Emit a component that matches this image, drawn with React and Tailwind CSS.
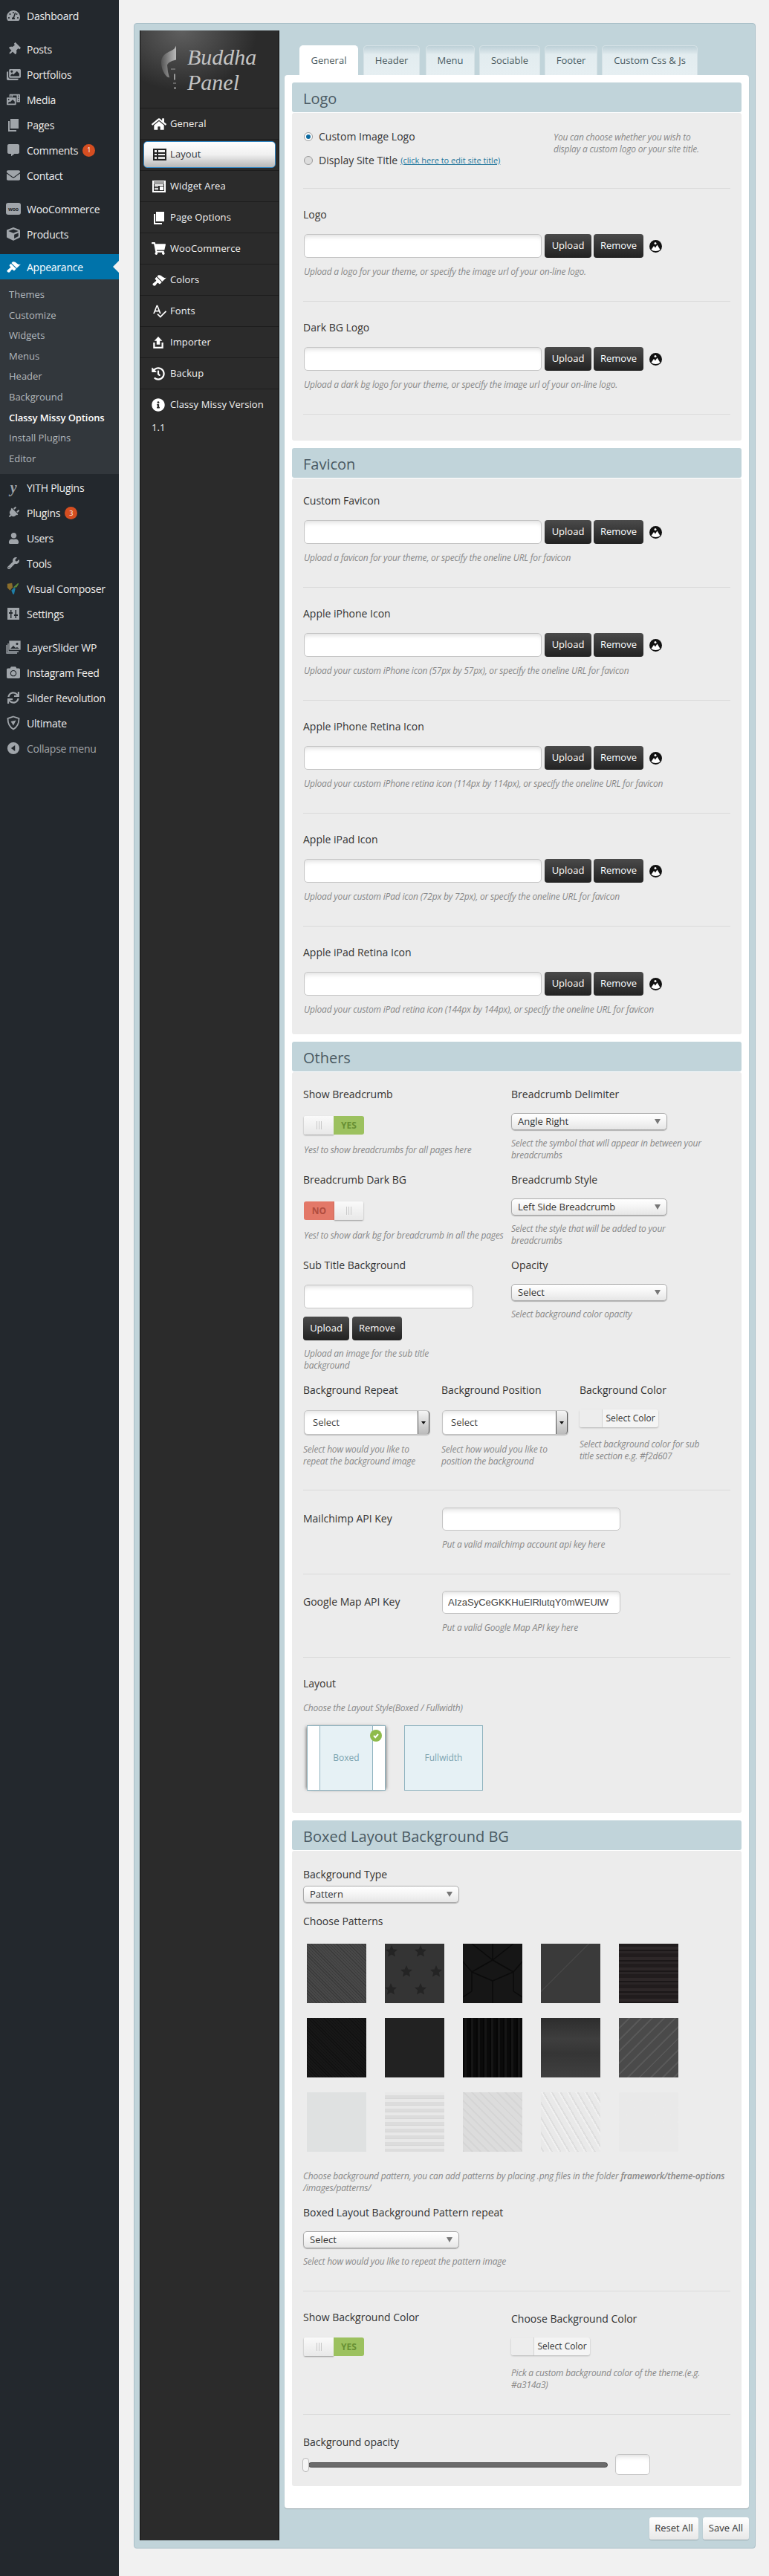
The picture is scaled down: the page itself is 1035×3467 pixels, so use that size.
import React from "react";
import { FaHome, FaShoppingCart, FaHistory, FaInfoCircle, FaTachometerAlt, FaThumbtack, FaImages, FaCommentAlt, FaEnvelope, FaCube, FaPlug, FaUser, FaWrench, FaCamera, FaSync, FaPhotoVideo } from "react-icons/fa";
import { MdSpellcheck } from "react-icons/md";

const BRUSH = "M14.48 11.06L7.41 3.99l1.5-1.5c.5-.56 2.3-.47 3.51.32 1.21.8 1.43 1.28 2.91 2.1 1.18.64 2.45 1.26 4.45.85zm-.71.71L6.7 4.7 4.93 6.47c-.39.39-.39 1.02 0 1.41l1.06 1.06c.39.39.39 1.03 0 1.42-.6.6-1.43 1.11-2.21 1.69-.35.26-.7.53-1.01.84C1.43 13.23 1 14.34 2.01 16.01c1.66 1.01 2.78.57 3.12.23.31-.31.58-.66.84-1.01.58-.78 1.09-1.61 1.69-2.21.39-.39 1.03-.39 1.42 0l1.06 1.06c.39.39 1.02.39 1.41 0z";

const Brush = ({ className }) => (
  <svg viewBox="0 0 20 18" className={className} fill="currentColor"><path d={BRUSH} /></svg>
);
const Pages = ({ className }) => (
  <svg viewBox="0 0 20 20" className={className} fill="currentColor">
    <path d="M6 2h11v13H6z" /><path d="M3 5h2v12h9v2H3z" />
  </svg>
);
const Woo = () => (
  <span className="flex h-[16px] w-[20px] items-center justify-center rounded-[3px] bg-[#a0a5aa] text-[7px] font-bold leading-none text-[#23282d]">woo</span>
);
const Yith = () => <span className="w-[20px] text-center font-['Liberation_Serif',serif] text-[20px] font-bold italic leading-none text-[#a0a5aa]">y</span>;
const VC = () => (
  <svg viewBox="0 0 20 20" className="h-[18px] w-[18px]">
    <path d="M1 3l7-1 1 6-4 5-4-4z" fill="#8a6d2b" />
    <path d="M10 8l7-6 1 1-3 5-4 1z" fill="#5f8a3a" />
    <path d="M7 13l4-4 2 1-2 9-2-1z" fill="#1f7fa8" />
  </svg>
);
const Settings = () => (
  <svg viewBox="0 0 20 20" className="h-[20px] w-[20px]" fill="#a0a5aa">
    <path fillRule="evenodd" d="M2 2h16v16H2zM6 5v3H4v2h2v6h1.500v-6H9V8H7.500V5zM12.500 5v6H11v2h1.500v3H14v-3h2v-2h-2V5z" />
  </svg>
);
const Layers = () => (
  <svg viewBox="0 0 20 20" className="h-[20px] w-[20px]" fill="none" stroke="#a0a5aa" strokeWidth="1.300">
    <path d="M1 7v11h14M3 5v11h14" />
    <rect x="5" y="2" width="14" height="11" fill="#a0a5aa" />
    <circle cx="15" cy="5.500" r="1.500" fill="#23282d" stroke="none" />
    <path d="M6 12l4-4 3 3 2-1 3 2z" fill="#23282d" stroke="none" />
  </svg>
);
const Shield = () => (
  <svg viewBox="0 0 20 20" className="h-[20px] w-[20px]" fill="none" stroke="#a0a5aa" strokeWidth="1.800">
    <path d="M10 1.500l7.500 2.500c0 7-2 11.500-7.500 14.500C4.500 15.500 2.500 11 2.500 4z" />
    <path d="M6.500 8l7-1.500-3.500 7z" fill="#a0a5aa" stroke="none" />
  </svg>
);
const Collapse = () => (
  <svg viewBox="0 0 20 20" className="h-[18px] w-[18px]" fill="#a0a5aa">
    <path fillRule="evenodd" d="M10 1a9 9 0 110 18 9 9 0 010-18zm2.500 4.500L6.500 10l6 4.500z" />
  </svg>
);

const adminTop = [
  [<FaTachometerAlt size={18} />, "Dashboard"],
  null,
  [<FaThumbtack size={17} className="rotate-45" />, "Posts"],
  [<FaImages size={19} />, "Portfolios"],
  [<FaPhotoVideo size={18} />, "Media"],
  [<Pages className="h-[20px] w-[20px]" />, "Pages"],
  [<FaCommentAlt size={16} />, "Comments", 1, "ml-[6px]"],
  [<FaEnvelope size={18} />, "Contact"],
  null,
  [<Woo />, "WooCommerce"],
  [<FaCube size={18} />, "Products"],
];
const adminBottom = [
  [<Yith />, "YITH Plugins"],
  [<FaPlug size={16} className="rotate-45" />, "Plugins", 3, "ml-[6px]"],
  [<FaUser size={15} />, "Users"],
  [<FaWrench size={16} />, "Tools"],
  [<VC />, "Visual Composer"],
  [<Settings />, "Settings"],
  null,
  [<Layers />, "LayerSlider WP"],
  [<FaCamera size={18} />, "Instagram Feed"],
  [<FaSync size={16} />, "Slider Revolution"],
  [<Shield />, "Ultimate"],
];
const subs = ["Themes", "Customize", "Widgets", "Menus", "Header", "Background", "Classy Missy Options", "Install Plugins", "Editor"];

function AdminItem({ item }) {
  return (
    <div className="flex h-[34px] items-center text-[14px] tracking-[-0.25px] text-[#eeeeee]">
      <span className="flex w-[36px] shrink-0 justify-center pl-[1px] pr-[1px] text-[#a0a5aa]">{item[0]}</span>
      <span className="whitespace-nowrap">{item[1]}</span>
      {item[2] ? (
        <span className={`${item[3]} flex h-[17px] w-[17px] items-center justify-center rounded-full bg-[#d54e21] text-[9px] text-white`}>{item[2]}</span>
      ) : null}
    </div>
  );
}

function AdminMenu() {
  return (
    <aside className="w-[160px] shrink-0 bg-[#23282d]">
      <div className="pt-[4px]">
        {adminTop.map((it, i) => (it ? <AdminItem key={i} item={it} /> : <div key={i} className="h-[11px]" />))}
      </div>
      <div className="relative mt-[10px] flex h-[34px] items-center bg-[#0073aa] text-[14px] tracking-[-0.25px] text-white">
        <span className="flex w-[36px] justify-center"><Brush className="h-[18px] w-[20px]" /></span>
        <span>Appearance</span>
        <span className="absolute right-0 top-[9px] h-0 w-0 border-y-[8px] border-r-[8px] border-y-transparent border-r-[#f1f1f1]" />
      </div>
      <div className="bg-[#32373c] py-[7px] text-[13px] text-[#b4b9be]">
        {subs.map((s) => (
          <div key={s} className={`flex h-[27.6px] items-center whitespace-nowrap pl-[12px] ${s === "Classy Missy Options" ? "font-semibold tracking-[-0.1px] text-white" : ""}`}>{s}</div>
        ))}
      </div>
      <div className="pt-[1px]">
        {adminBottom.map((it, i) => (it ? <AdminItem key={i} item={it} /> : <div key={i} className="h-[11px]" />))}
        <div className="flex h-[34px] items-center text-[14px] tracking-[-0.25px] text-[#a0a5aa]">
          <span className="flex w-[36px] justify-center"><Collapse /></span>
          <span>Collapse menu</span>
        </div>
      </div>
    </aside>
  );
}

const LayoutIc = ({ className }) => (
  <svg viewBox="0 0 20 20" className={className} fill="currentColor">
    <path fillRule="evenodd" d="M1 2h18v16H1zM3 4v3h3V4zM8 4v3h9V4zM3 9v2h3V9zM8 9v2h9V9zM3 13v3h3v-3zM8 13v3h9v-3z" />
  </svg>
);
const WidgetIc = ({ className }) => (
  <svg viewBox="0 0 20 20" className={className} fill="currentColor">
    <path fillRule="evenodd" d="M1 2h18v16H1zM3 6v10h14V6zM3 3.500v1h14v-1z" />
    <path d="M4 7h12v2H4zM4 10h5v1H4zM4 12h5v1H4zM4 14h5v1H4zM11 10h5v5h-5z" />
  </svg>
);
const UploadIc = ({ className }) => (
  <svg viewBox="0 0 20 20" className={className} fill="currentColor">
    <path d="M10 1l6 6.500h-3.500V13h-5V7.500H4z" /><path d="M2.500 10H5v6.500h10V10h2.500v9h-15z" />
  </svg>
);

const panelMenu = [
  [<FaHome size={20} />, "General"],
  [<LayoutIc className="h-[20px] w-[20px]" />, "Layout", true],
  [<WidgetIc className="h-[20px] w-[20px]" />, "Widget Area"],
  [<Pages className="h-[20px] w-[20px]" />, "Page Options"],
  [<FaShoppingCart size={19} />, "WooCommerce"],
  [<Brush className="h-[18px] w-[20px]" />, "Colors"],
  [<MdSpellcheck size={21} />, "Fonts"],
  [<UploadIc className="h-[18px] w-[18px]" />, "Importer"],
  [<FaHistory size={18} />, "Backup"],
  [<FaInfoCircle size={18} />, "Classy Missy Version"],
];

function PanelMenu() {
  return (
    <div className="w-[188px] shrink-0 border-x border-[#111111] bg-[#2b2b2b] text-[13px] tracking-[0.1px] text-[#f2f2f2]">
      <div className="flex h-[104px] items-start bg-[radial-gradient(ellipse_at_30%_0%,#5f5f5f,#2b2b2b_55%)] pl-[28px] pt-[20px]">
        <svg viewBox="0 0 20 60" className="mr-[15px] h-[61px] w-[20px] shrink-0">
          <defs><linearGradient id="hd" x1="0" x2="1" y1="0" y2="0"><stop offset="0" stopColor="#555" /><stop offset="1" stopColor="#bbb" /></linearGradient></defs>
          <path d="M20 0v19c-5 1-10 3-12 7l1 9 2 8-3-1c-5-5-8-12-8-20 0-7 5-12 13-15 4-2 6-4 7-7z" fill="url(#hd)" />
          <path d="M13 31h6v1h-6zM17 38h2v8h-2zM16 50h4v1h-4zM17 56h3v2h-3z" fill="#999" />
        </svg>
        <div className="font-['Liberation_Serif',serif] text-[30px] italic leading-[34px] tracking-normal text-[#c4c4c4]">
          <div className="mt-[-1px]">Buddha</div>
          <div>Panel</div>
        </div>
      </div>
      {panelMenu.map(([ic, label, active]) => (
        <div key={label} className="h-[42px] border-t border-[#1d1d1d] pl-[1px] pr-[1px]">
          {active ? (
            <div className="mx-[3px] mt-[2px] flex h-[36px] items-center rounded-[5px] border border-[#2f86c5] bg-[linear-gradient(#ffffff,#f0f0f0_50%,#b8b8b8)] pl-[11px] text-[#333333]">
              <span className="flex w-[24px] shrink-0 justify-start text-[#222222]">{ic}</span>
              <span className="pl-[0px]">{label}</span>
            </div>
          ) : (
            <div className="flex h-[41px] items-center pl-[14px]">
              <span className="flex w-[25px] shrink-0 justify-start text-white">{ic}</span>
              <span className="whitespace-nowrap">{label}</span>
            </div>
          )}
        </div>
      ))}
      <div className="pl-[15px] pt-[0px] leading-[20px]">1.1</div>
    </div>
  );
}

const Label = ({ children, className = "" }) => (
  <div className={`h-[20px] whitespace-nowrap text-[14px] leading-[20px] text-[#333333] ${className}`}>{children}</div>
);
const Desc = ({ children, className = "" }) => (
  <div className={`text-[12px] italic leading-[16px] tracking-[-0.2px] text-[#888888] ${className}`}>{children}</div>
);
const SectionHead = ({ children }) => (
  <div className="flex h-[40px] items-center rounded-[3px] bg-[#c1d4da] pl-[15px] pt-[3px] text-[20px] text-[#4a5a63]">{children}</div>
);
const Body = ({ children, className = "" }) => (
  <div className={`mt-[1px] rounded-[3px] bg-[#ececec] px-[15px] ${className}`}>{children}</div>
);
const Field = ({ w, h, children }) => (
  <div className={`${w} ${h} rounded-[5px] border border-[#c4c4c4] bg-white shadow-[inset_0_6px_6px_-4px_rgba(0,0,0,0.14)]`}>{children}</div>
);
const DarkBtn = ({ children, className }) => (
  <div className={`flex items-center justify-center rounded-[4px] bg-[linear-gradient(#4a4a4a,#222222)] text-[13px] text-white ${className}`}>{children}</div>
);
const ImgIcon = () => (
  <svg viewBox="0 0 17 17" className="h-[17px] w-[17px]">
    <circle cx="8.500" cy="8.500" r="8.500" fill="#111111" />
    <path d="M2.500 13l3.500-5 2 2.500 2.500-4 4 6.500c-1.500 1.200-3.500 2-6 2s-4.500-.8-6-2z" fill="#ffffff" />
    <circle cx="8" cy="4.500" r="1.500" fill="#ffffff" />
  </svg>
);

function UploadRow({ label, desc, first, last }) {
  return (
    <div className={`${first ? "pt-[20px]" : "pt-[25px]"} ${last ? "pb-[25px]" : "border-b border-[#dadada] pb-[31px]"}`}>
      <Label>{label}</Label>
      <div className="mt-[16px] flex h-[32px] items-center pl-[1px]">
        <Field w="w-[320px]" h="h-[32px]" />
        <DarkBtn className="ml-[4px] h-[32px] w-[63px]">Upload</DarkBtn>
        <DarkBtn className="ml-[3px] h-[32px] w-[67px]">Remove</DarkBtn>
        <span className="ml-[8px]"><ImgIcon /></span>
      </div>
      <Desc className="mt-[11px] pl-[1px]">{desc}</Desc>
    </div>
  );
}

const Toggle = ({ on }) =>
  on ? (
    <div className="ml-[1px] flex h-[25px] w-[81px]">
      <div className="flex w-[40px] items-center justify-center gap-[2px] rounded-l-[2px] bg-[linear-gradient(#fafafa,#e8e8e8)] shadow-[0_1px_2px_rgba(0,0,0,0.35)]">
        <i className="h-[11px] w-px bg-[#c9c9c9]" /><i className="h-[11px] w-px bg-[#c9c9c9]" /><i className="h-[11px] w-px bg-[#c9c9c9]" />
      </div>
      <div className="flex flex-1 items-center justify-center rounded-r-[3px] bg-[#9cc15f] text-[12px] font-bold text-[#678f33]">YES</div>
    </div>
  ) : (
    <div className="ml-[1px] flex h-[25px] w-[80px]">
      <div className="flex w-[41px] items-center justify-center rounded-l-[3px] bg-[#e37868] text-[12px] font-bold text-[#b04c3f]">NO</div>
      <div className="flex flex-1 items-center justify-center gap-[2px] rounded-r-[2px] bg-[linear-gradient(#fafafa,#e8e8e8)] shadow-[0_1px_2px_rgba(0,0,0,0.35)]">
        <i className="h-[11px] w-px bg-[#c9c9c9]" /><i className="h-[11px] w-px bg-[#c9c9c9]" /><i className="h-[11px] w-px bg-[#c9c9c9]" />
      </div>
    </div>
  );

const Select = ({ children, className = "" }) => (
  <div className={`relative flex h-[23px] w-[210px] items-center rounded-[5px] border border-[#aaaaaa] bg-[linear-gradient(#ffffff,#f7f7f7_40%,#e6e6e6)] pl-[8px] text-[13px] text-[#333333] shadow-[0_1px_1px_rgba(0,0,0,0.25)] ${className}`}>
    {children}
    <span className="absolute right-[8px] top-[7px] h-0 w-0 border-x-[4px] border-t-[7px] border-x-transparent border-t-[#777777]" />
  </div>
);
const BigSelect = ({ className = "" }) => (
  <div className={`relative flex h-[33px] w-[170px] items-center rounded-[5px] border border-[#c4c4c4] bg-white pl-[11px] text-[13px] text-[#444444] shadow-[inset_0_6px_6px_-4px_rgba(0,0,0,0.12),0_1px_1px_rgba(0,0,0,0.2)] ${className}`}>
    Select
    <span className="absolute right-0 top-0 flex h-[31px] w-[16px] items-center justify-center rounded-r-[4px] border-x border-[#555555] bg-[linear-gradient(#f5f5f5,#bbbbbb)]">
      <span className="h-0 w-0 border-x-[3px] border-t-[4px] border-x-transparent border-t-[#111111]" />
    </span>
  </div>
);
const ColorPick = () => (
  <div className="flex h-[24px] w-[106px] rounded-[3px] bg-[#f4f4f4] text-[12px] text-[#333333] shadow-[0_1px_2px_rgba(0,0,0,0.25)]">
    <div className="w-[31px] rounded-l-[3px] border-r border-[#d4d4d4] bg-[#ededed]" />
    <div className="flex flex-1 items-center justify-center">Select Color</div>
  </div>
);

const stars = [[9, 10], [48, 10], [29, 37], [69, 37], [8, 61], [48, 61]];
const Star = ({ x, y }) => (
  <path transform={`translate(${x} ${y})`} d="M0-8l2.300 5.500 5.700.5-4.300 3.800 1.300 5.700L0 4.500l-5 3 1.300-5.700L-8-2l5.700-.5z" fill="#242424" />
);
const patterns = [
  <div className="h-full w-full bg-[#434343] bg-[repeating-linear-gradient(45deg,#3b3b3b_0_1px,#484848_1px_3px)]" />,
  <svg viewBox="0 0 80 80" className="h-full w-full bg-[#343434]">{stars.map(([x, y]) => <Star key={x + "-" + y} x={x} y={y} />)}</svg>,
  <svg viewBox="0 0 80 80" className="h-full w-full bg-[#161616]" stroke="#0b0b0b" strokeWidth="1.500" fill="none"><path d="M40 0v22M40 22L12 38v26M40 22l28 16v26M0 24l12 14M80 24L68 38M40 50L12 38M40 50l28-12M40 50v30M12 64L0 72M68 64l12 8M12 0l28 22M68 0L40 22" /></svg>,
  <div className="h-full w-full bg-[#3e3e3e] bg-[linear-gradient(135deg,#3a3a3a_0_40%,#454545_40%_41%,#3a3a3a_41%_100%)]" />,
  <div className="h-full w-full bg-[#241f20] bg-[repeating-linear-gradient(0deg,#1b1718_0_2px,#2d2728_2px_6px,#211c1d_6px_11px,#2a2526_11px_14px)]" />,
  <div className="h-full w-full bg-[#141414] bg-[repeating-linear-gradient(45deg,#111111_0_1px,#171717_1px_3px)]" />,
  <div className="h-full w-full bg-[#222222]" />,
  <div className="h-full w-full bg-[#0d0d0d] bg-[repeating-linear-gradient(90deg,#060606_0_2px,#151515_2px_5px,#0a0a0a_5px_9px)]" />,
  <div className="h-full w-full bg-[linear-gradient(#2d2d2d,#3e3e3e_35%,#353535_60%,#404040)]" />,
  <div className="h-full w-full bg-[#4a4a4a] bg-[repeating-linear-gradient(135deg,#4a4a4a_0_9px,#585858_9px_11px)]" />,
  <div className="h-full w-full bg-[#dfe1e1]" />,
  <div className="h-full w-full bg-[repeating-linear-gradient(0deg,#dcdcdc_0_4px,#e8e8e8_4px_8px,#d6d6d6_8px_9px)]" />,
  <div className="h-full w-full bg-[#dadada] bg-[repeating-linear-gradient(45deg,#d5d5d5_0_2px,#dcdcdc_2px_8px)]" />,
  <div className="h-full w-full bg-[#e6e6e6] bg-[repeating-linear-gradient(60deg,#f0f0f0_0_2px,#dedede_2px_4px,#e9e9e9_4px_10px)]" />,
  <div className="h-full w-full bg-[#ebebeb] bg-[repeating-linear-gradient(45deg,#f0f0f0_0_1px,#e9e9e9_1px_14px),repeating-linear-gradient(135deg,#f0f0f0_0_1px,#e9e9e9_1px_14px)] bg-blend-darken" />,
];

const tabs = [["General", "w-[79px]"], ["Header", "ml-[7px] w-[76px]"], ["Menu", "ml-[8px] w-[66px]"], ["Sociable", "ml-[6px] w-[82px]"], ["Footer", "ml-[6px] w-[71px]"], ["Custom Css & Js", "ml-[6px] w-[129px]"]];

function Content() {
  return (
    <div className="min-w-0 flex-1 pl-[7px] pt-[20px]">
      <div className="flex h-[40px] pl-[20px] text-[13px] text-[#4a5a60]">
        {tabs.map(([t, w], i) => (
          <div key={t} className={`${w} flex items-center justify-center whitespace-nowrap rounded-t-[5px] border border-b-0 ${i === 0 ? "border-white bg-white" : "border-[#d6e2e6] bg-[linear-gradient(#bdd0d7,#e2ecef_30%,#e6eff2)]"}`}>{t}</div>
        ))}
      </div>
      <div className="rounded-[4px] bg-white px-[10px] pb-[30px] pt-[10px] shadow-[0_1px_1px_rgba(0,0,0,0.2)]">
        <SectionHead>Logo</SectionHead>
        <Body>
          <div className="flex border-b border-[#dadada] pb-[27px] pt-[22px]">
            <div className="w-[337px] text-[14px] leading-[20px] text-[#333333]">
              <div className="flex h-[20px] items-center pl-[1px]">
                <span className="mr-[8px] flex h-[12px] w-[12px] items-center justify-center rounded-full border border-[#999999] bg-white"><span className="h-[6px] w-[6px] rounded-full bg-[#0b6aa0]" /></span>
                Custom Image Logo
              </div>
              <div className="mt-[12px] flex h-[20px] items-center pl-[1px]">
                <span className="mr-[8px] h-[12px] w-[12px] rounded-full border border-[#999999] bg-[#dddddd]" />
                Display Site Title
                <span className="ml-[4px] text-[11px] text-[#21759b] underline">(click here to edit site title)</span>
              </div>
            </div>
            <Desc className="pt-[3px]">You can choose whether you wish to<br />display a custom logo or your site title.</Desc>
          </div>
          <UploadRow label="Logo" desc="Upload a logo for your theme, or specify the image url of your on-line logo." />
          <UploadRow label="Dark BG Logo" desc="Upload a dark bg logo for your theme, or specify the image url of your on-line logo." />
          <div className="h-[35px]" />
        </Body>

        <div className="mt-[10px]"><SectionHead>Favicon</SectionHead></div>
        <Body>
          <UploadRow first label="Custom Favicon" desc="Upload a favicon for your theme, or specify the oneline URL for favicon" />
          <UploadRow label="Apple iPhone Icon" desc="Upload your custom iPhone icon (57px by 57px), or specify the oneline URL for favicon" />
          <UploadRow label="Apple iPhone Retina Icon" desc="Upload your custom iPhone retina icon (114px by 114px), or specify the oneline URL for favicon" />
          <UploadRow label="Apple iPad Icon" desc="Upload your custom iPad icon (72px by 72px), or specify the oneline URL for favicon" />
          <UploadRow last label="Apple iPad Retina Icon" desc="Upload your custom iPad retina icon (144px by 144px), or specify the oneline URL for favicon" />
        </Body>

        <div className="mt-[10px]"><SectionHead>Others</SectionHead></div>
        <Body>
          <div className="grid grid-cols-[280px_1fr] grid-rows-[115px_115px_168px] pt-[20px]">
            <div>
              <Label>Show Breadcrumb</Label>
              <div className="mt-[19px]"><Toggle on /></div>
              <Desc className="mt-[13px] pl-[1px]">Yes! to show breadcrumbs for all pages here</Desc>
            </div>
            <div>
              <Label>Breadcrumb Delimiter</Label>
              <Select className="mt-[15px]">Angle Right</Select>
              <Desc className="mt-[10px] w-[270px]">Select the symbol that will appear in between your breadcrumbs</Desc>
            </div>
            <div>
              <Label>Breadcrumb Dark BG</Label>
              <div className="mt-[19px]"><Toggle /></div>
              <Desc className="mt-[13px] whitespace-nowrap pl-[1px]">Yes! to show dark bg for breadcrumb in all the pages</Desc>
            </div>
            <div>
              <Label>Breadcrumb Style</Label>
              <Select className="mt-[15px]">Left Side Breadcrumb</Select>
              <Desc className="mt-[10px] w-[220px]">Select the style that will be added to your breadcrumbs</Desc>
            </div>
            <div>
              <Label>Sub Title Background</Label>
              <div className="ml-[1px] mt-[16px]"><Field w="w-[228px]" h="h-[32px]" /></div>
              <div className="mt-[11px] flex gap-[4px]">
                <DarkBtn className="h-[32px] w-[62px]">Upload</DarkBtn>
                <DarkBtn className="h-[32px] w-[67px]">Remove</DarkBtn>
              </div>
              <Desc className="mt-[10px] w-[200px] pl-[1px]">Upload an image for the sub title background</Desc>
            </div>
            <div>
              <Label>Opacity</Label>
              <Select className="mt-[15px]">Select</Select>
              <Desc className="mt-[10px]">Select background color opacity</Desc>
            </div>
          </div>
          <div className="flex h-[145px] border-b border-[#dadada]">
            <div className="w-[186px]">
              <Label>Background Repeat</Label>
              <BigSelect className="ml-[1px] mt-[17px]" />
              <Desc className="mt-[12px] w-[170px]">Select how would you like to repeat the background image</Desc>
            </div>
            <div className="w-[186px]">
              <Label>Background Position</Label>
              <BigSelect className="ml-[1px] mt-[17px]" />
              <Desc className="mt-[12px] w-[170px]">Select how would you like to position the background</Desc>
            </div>
            <div className="flex-1">
              <Label>Background Color</Label>
              <div className="mt-[16px]"><ColorPick /></div>
              <Desc className="mt-[15px] w-[175px]">Select background color for sub title section e.g. #f2d607</Desc>
            </div>
          </div>
          <div className="flex border-b border-[#dadada] pb-[31px] pt-[23px]">
            <Label className="mt-[5px] w-[187px]">Mailchimp API Key</Label>
            <div>
              <Field w="w-[240px]" h="h-[31px]" />
              <Desc className="mt-[11px]">Put a valid mailchimp account api key here</Desc>
            </div>
          </div>
          <div className="flex border-b border-[#dadada] pb-[31px] pt-[22px]">
            <Label className="mt-[5px] w-[187px]">Google Map API Key</Label>
            <div>
              <Field w="w-[240px]" h="h-[31px]">
                <div className="mx-[7px] overflow-hidden whitespace-nowrap font-['Liberation_Sans',sans-serif] text-[13px] leading-[29px] text-[#444444]">AIzaSyCeGKKHuElRlutqY0mWEUlW</div>
              </Field>
              <Desc className="mt-[11px]">Put a valid Google Map API key here</Desc>
            </div>
          </div>
          <div className="pb-[30px] pt-[25px]">
            <Label>Layout</Label>
            <Desc className="mt-[15px]">Choose the Layout Style(Boxed / Fullwidth)</Desc>
            <div className="ml-[5px] mt-[15px] flex gap-[25px] text-[12px] text-[#7ba3ae]">
              <div className="relative flex h-[88px] w-[106px] border border-[#8fb3bf] bg-white shadow-[-3px_0_4px_-2px_#777777,3px_0_4px_-2px_#777777]">
                <div className="ml-[16px] mr-[16px] flex flex-1 items-center justify-center border-x border-[#8fb3bf] bg-[#e6f1f5]">Boxed</div>
                <span className="absolute right-[4px] top-[5px] flex h-[16px] w-[16px] items-center justify-center rounded-full bg-[#8ebb4b]">
                  <svg viewBox="0 0 10 10" className="h-[10px] w-[10px]" fill="none" stroke="#ffffff" strokeWidth="2"><path d="M2 5l2.200 2.200L8 3" /></svg>
                </span>
              </div>
              <div className="flex h-[88px] w-[106px] items-center justify-center border border-[#8fb3bf] bg-[#e6f1f5]">Fullwidth</div>
            </div>
          </div>
        </Body>

        <div className="mt-[10px]"><SectionHead>Boxed Layout Background BG</SectionHead></div>
        <Body>
          <div className="border-b border-[#dadada] pb-[31px] pt-[22px]">
            <Label>Background Type</Label>
            <Select className="mt-[5px]">Pattern</Select>
            <Label className="mt-[15px]">Choose Patterns</Label>
            <div className="ml-[5px] mt-[20px] grid grid-cols-[repeat(5,80px)] gap-x-[25px] gap-y-[20px]">
              {patterns.map((p, i) => (
                <div key={i} className="h-[80px] w-[80px] overflow-hidden">{p}</div>
              ))}
            </div>
            <Desc className="mt-[25px] whitespace-nowrap">Choose background pattern, you can add patterns by placing .png files in the folder <b className="font-semibold">framework/theme-options</b><br />/images/patterns/</Desc>
            <Label className="mt-[15px]">Boxed Layout Background Pattern repeat</Label>
            <Select className="mt-[15px]">Select</Select>
            <Desc className="mt-[10px]">Select how would you like to repeat the pattern image</Desc>
          </div>
          <div className="flex border-b border-[#dadada] pb-[31px] pt-[25px]">
            <div className="w-[280px]">
              <Label>Show Background Color</Label>
              <div className="mt-[17px]"><Toggle on /></div>
            </div>
            <div className="flex-1 pt-[2px]">
              <Label>Choose Background Color</Label>
              <div className="mt-[15px]"><ColorPick /></div>
              <Desc className="mt-[16px] w-[270px]">Pick a custom background color of the theme.(e.g. #a314a3)</Desc>
            </div>
          </div>
          <div className="pb-[15px] pt-[27px]">
            <Label>Background opacity</Label>
            <div className="mt-[6px] flex h-[28px] items-center">
              <div className="relative ml-[7px] h-[7px] w-[403px] rounded-[4px] border border-[#444444] bg-[#6b6b6b]">
                <span className="absolute left-[-9px] top-[-7px] h-[19px] w-[9px] rounded-[4px] border border-[#bbbbbb] bg-[#f5f5f5]" />
              </div>
              <div className="ml-[10px]"><Field w="w-[47px]" h="h-[28px]" /></div>
            </div>
          </div>
        </Body>
      </div>
      <div className="mt-[12px] flex justify-end gap-[6px] text-[13px] text-[#333333]">
        <div className="flex h-[30px] w-[66px] items-center justify-center rounded-[3px] bg-[linear-gradient(#ffffff,#e8e8e8)] shadow-[0_1px_1px_rgba(0,0,0,0.2)]">Reset All</div>
        <div className="flex h-[30px] w-[62px] items-center justify-center rounded-[3px] bg-[linear-gradient(#ffffff,#e8e8e8)] shadow-[0_1px_1px_rgba(0,0,0,0.2)]">Save All</div>
      </div>
    </div>
  );
}

export default function App() {
  return (
    <div className="flex min-h-[3467px] bg-[#f1f1f1] font-['Open_Sans',sans-serif]">
      <AdminMenu />
      <main className="ml-[20px] mt-[31px] h-[3399px] w-[837px]">
        <div className="flex h-full rounded-[4px] border border-[#a9bfc8] bg-[#c1d4da] pb-[10px] pl-[7px] pr-[8px] pt-[9px]">
          <PanelMenu />
          <Content />
        </div>
      </main>
    </div>
  );
}
